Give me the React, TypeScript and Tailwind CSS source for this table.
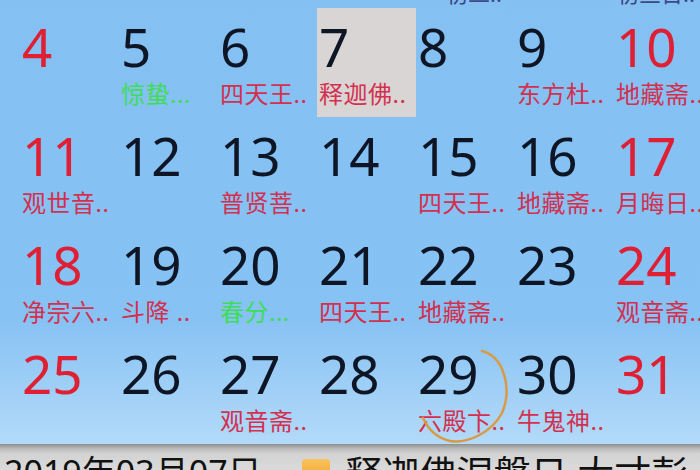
// Month grid (zoomed phone calendar) with status strip at the bottom

type Day = {
    d: number;
    label?: string;
    red?: boolean;
    green?: boolean;
    sel?: boolean;
};

const weeks: Day[][] = [
    [
        { d: 4, red: true },
        { d: 5, label: "惊蛰...", green: true },
        { d: 6, label: "四天王.." },
        { d: 7, label: "释迦佛..", sel: true },
        { d: 8 },
        { d: 9, label: "东方杜.." },
        { d: 10, label: "地藏斋..", red: true },
    ],
    [
        { d: 11, label: "观世音..", red: true },
        { d: 12 },
        { d: 13, label: "普贤菩.." },
        { d: 14 },
        { d: 15, label: "四天王.." },
        { d: 16, label: "地藏斋.." },
        { d: 17, label: "月晦日..", red: true },
    ],
    [
        { d: 18, label: "净宗六..", red: true },
        { d: 19, label: "斗降 .." },
        { d: 20, label: "春分...", green: true },
        { d: 21, label: "四天王.." },
        { d: 22, label: "地藏斋.." },
        { d: 23 },
        { d: 24, label: "观音斋..", red: true },
    ],
    [
        { d: 25, red: true },
        { d: 26 },
        { d: 27, label: "观音斋.." },
        { d: 28 },
        { d: 29, label: "六殿卞.." },
        { d: 30, label: "牛鬼神.." },
        { d: 31, red: true },
    ],
];

const cjk = "font-['Noto_Sans','Noto_Sans_CJK_SC',sans-serif]";

function Cell({ day }: { day: Day }) {
    return (
        <div className={`h-[109px] pl-[2px] pt-[12px] ${day.sel ? "bg-[#d9d5d4]" : ""}`}>
            <div
                className={`text-[53px] leading-none whitespace-nowrap ${
                    day.red ? "text-[#df1f33]" : "text-[#0e1626]"
                }`}
            >
                {day.d}
            </div>
            {day.label && (
                <div
                    className={`mt-[9px] text-[24px] leading-none tracking-[0.5px] whitespace-nowrap ${
                        day.green ? "text-[#3fdc58]" : "text-[#d3304f]"
                    }`}
                >
                    {day.label}
                </div>
            )}
        </div>
    );
}

export default function App() {
    return (
        <div className={`relative w-[700px] h-[470px] overflow-hidden ${cjk}`}>
            <div className="h-[444px] overflow-hidden bg-[linear-gradient(180deg,#85c0f3_0%,#87c2f4_72%,#b3daf8_100%)]">
                {/* last week's labels, mostly scrolled away */}
                <div className="h-[8px] overflow-hidden pl-[20px]">
                    <div className="grid grid-cols-[repeat(7,99px)] -mt-[18px] text-[22px] leading-none text-[#3a4a88]">
                        <span />
                        <span />
                        <span />
                        <span />
                        <span className="pl-[30px]">初二..</span>
                        <span />
                        <span className="pl-[3px]">初三日..</span>
                    </div>
                </div>
                <div className="pl-[20px]">
                    {weeks.map((w, i) => (
                        <div key={i} className="grid grid-cols-[repeat(7,99px)]">
                            {w.map((day) => (
                                <Cell key={day.d} day={day} />
                            ))}
                        </div>
                    ))}
                </div>
            </div>

            {/* status strip */}
            <div className="h-[26px] overflow-hidden bg-[linear-gradient(180deg,#8e8e8e_0px,#bdbdbd_5px,#d3d3d3_10px,#dadada_100%)] pt-[11px] flex items-start text-[#111] text-[34px] leading-none whitespace-nowrap">
                <span className="pl-[4px]">2019年03月07日</span>
                <span className="ml-[40px] mt-[4px] w-[28px] h-[28px] rounded-[4px] bg-[linear-gradient(180deg,#f9c25a,#f19a25)] shrink-0" />
                <span className="ml-[16px] text-[37px]">释迦佛涅槃日 大寸彭</span>
            </div>

            {/* hand-drawn circle around the 29th */}
            <svg className="absolute left-0 top-0 pointer-events-none" width="700" height="470">
                <path
                    d="M 482 351 C 505 357 512 390 502 413 C 492 432 468 444 450 441 C 437 438 428 429 423 418"
                    fill="none"
                    stroke="#d99a45"
                    strokeWidth="2.5"
                    strokeLinecap="round"
                />
            </svg>
        </div>
    );
}
